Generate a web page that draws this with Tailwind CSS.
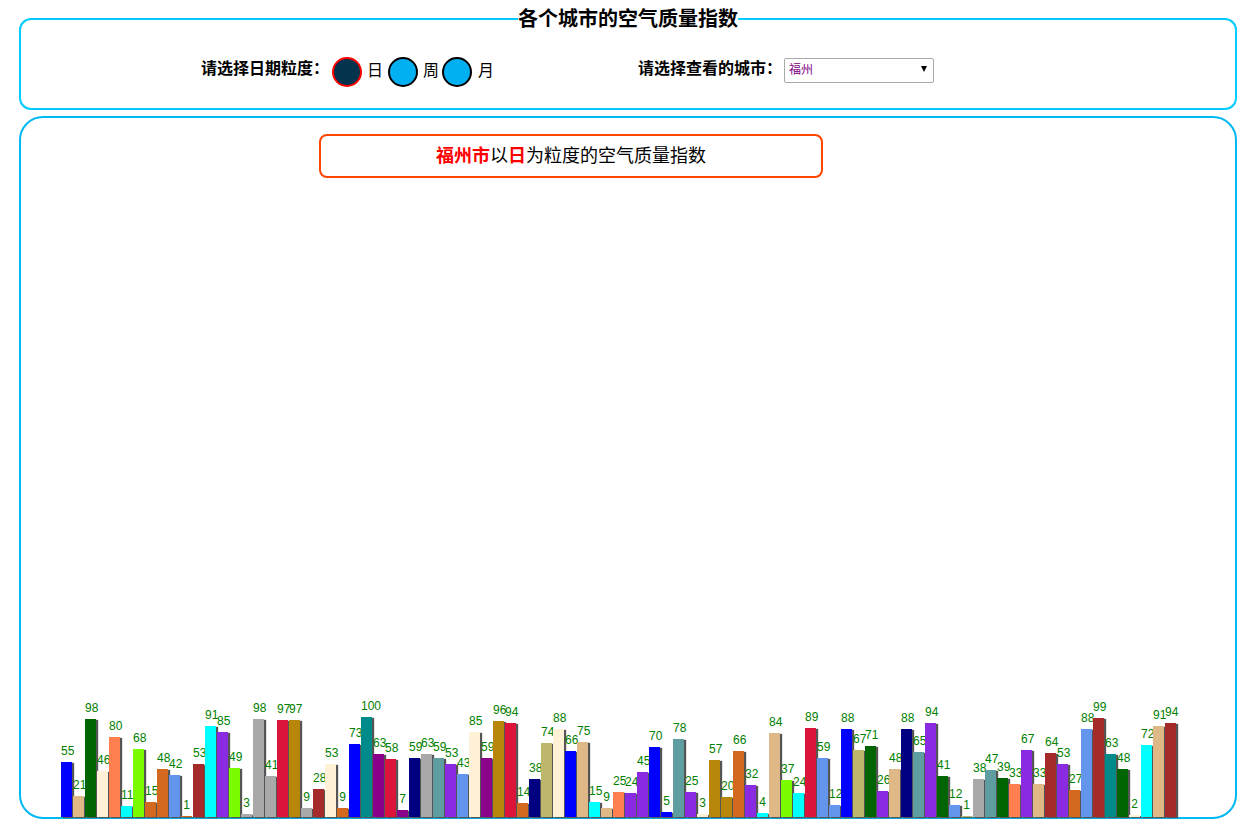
<!DOCTYPE html>
<html lang="zh-CN">
<head>
  <meta charset="UTF-8" />
  <title>各个城市的空气质量指数</title>
  <script src="https://cdn.jsdelivr.net/npm/@tailwindcss/browser@4"></script>
</head>
<body class="bg-white text-black font-['Liberation_Sans','Noto_Sans_CJK_SC',sans-serif] overflow-hidden h-[827px]">

  <fieldset class="mt-[5px] mx-[19px] h-[105px] border-2 border-[#00ccff] rounded-[12px]">
    <legend class="mx-auto text-[20px] leading-[28px] font-bold">各个城市的空气质量指数</legend>
    <div class="flex items-start pt-[24px] pl-[180px]">
      <div class="flex items-start">
        <span class="text-[16px] leading-[24px] font-bold mr-[3px]">请选择日期粒度：</span>
        <input type="radio" name="grain" checked class="appearance-none w-[30px] h-[30px] rounded-full border-2 border-black bg-[#00b0f0] checked:border-[#ff0000] checked:bg-[#03334d]" />
        <span class="text-[16px] leading-[28px] ml-[5px] mr-[5px]">日</span>
        <input type="radio" name="grain" class="appearance-none w-[30px] h-[30px] rounded-full border-2 border-black bg-[#00b0f0] checked:border-[#ff0000] checked:bg-[#03334d]" />
        <span class="text-[16px] leading-[28px] ml-[5px] mr-[3px]">周</span>
        <input type="radio" name="grain" class="appearance-none w-[30px] h-[30px] rounded-full border-2 border-black bg-[#00b0f0] checked:border-[#ff0000] checked:bg-[#03334d]" />
        <span class="text-[16px] leading-[28px] ml-[6px]">月</span>
      </div>
      <div class="flex items-start ml-[144px]">
        <span class="text-[16px] leading-[24px] font-bold mr-[2px]">请选择查看的城市：</span>
        <div class="relative">
          <select class="appearance-none w-[150px] h-[25px] border border-[#a9a9a9] rounded-[2px] bg-white pl-[4px] text-[12px] text-[#800080]">
            <option>福州</option>
            <option>厦门</option>
            <option>泉州</option>
          </select>
          <span class="absolute right-[7px] top-[9px] w-0 h-0 border-x-[3px] border-x-transparent border-t-[6px] border-t-black"></span>
        </div>
      </div>
    </div>
  </fieldset>

  <section class="mt-[6px] mx-[19px] h-[703px] border-2 border-[#00b9f1] rounded-[24px] flex flex-col justify-between">
    <div class="mt-[16px] ml-[298px] w-[504px] h-[44px] border-2 border-[#ff4500] rounded-[8px] flex items-center justify-center text-[18px]">
      <b class="text-[#ff0000]">福州市</b>以<b class="text-[#ff0000]">日</b>为粒度的空气质量指数
    </div>
    <div id="chart" class="flex items-end pl-[40px]"></div>
  </section>

  <script>
    const colors = {
      blue: 'bg-[#0000ff]',
      wood: 'bg-[#deb887]',
      green: 'bg-[#006400]',
      papaya: 'bg-[#fff1d5]',
      coral: 'bg-[#ff7f50]',
      aqua: 'bg-[#00ffff]',
      lawn: 'bg-[#7cfc00]',
      choc: 'bg-[#d2691e]',
      corn: 'bg-[#6495ed]',
      brown: 'bg-[#a52a2a]',
      violet: 'bg-[#8a2be2]',
      gray: 'bg-[#a9a9a9]',
      crimson: 'bg-[#dc143c]',
      gold: 'bg-[#b8860b]',
      navy: 'bg-[#000080]',
      cyan: 'bg-[#008b8b]',
      magenta: 'bg-[#8b008b]',
      cadet: 'bg-[#5f9ea0]',
      khaki: 'bg-[#bdb76b]'
    };

    const data = [
      [55,'blue'],[21,'wood'],[98,'green'],[46,'papaya'],[80,'coral'],[11,'aqua'],[68,'lawn'],[15,'choc'],
      [48,'choc'],[42,'corn'],[1,'choc'],[53,'brown'],[91,'aqua'],[85,'violet'],[49,'lawn'],[3,'gray'],
      [98,'gray'],[41,'gray'],[97,'crimson'],[97,'gold'],[9,'gray'],[28,'brown'],[53,'papaya'],[9,'choc'],
      [73,'blue'],[100,'cyan'],[63,'magenta'],[58,'crimson'],[7,'magenta'],[59,'navy'],[63,'gray'],[59,'cadet'],
      [53,'violet'],[43,'corn'],[85,'papaya'],[59,'magenta'],[96,'gold'],[94,'crimson'],[14,'choc'],[38,'navy'],
      [74,'khaki'],[88,'papaya'],[66,'blue'],[75,'wood'],[15,'aqua'],[9,'wood'],[25,'coral'],[24,'violet'],
      [45,'violet'],[70,'blue'],[5,'blue'],[78,'cadet'],[25,'violet'],[3,'papaya'],[57,'gold'],[20,'gold'],
      [66,'choc'],[32,'violet'],[4,'aqua'],[84,'wood'],[37,'lawn'],[24,'aqua'],[89,'crimson'],[59,'corn'],
      [12,'corn'],[88,'blue'],[67,'khaki'],[71,'green'],[26,'violet'],[48,'wood'],[88,'navy'],[65,'cadet'],
      [94,'violet'],[41,'green'],[12,'corn'],[1,'khaki'],[38,'gray'],[47,'cadet'],[39,'green'],[33,'coral'],
      [67,'violet'],[33,'wood'],[64,'brown'],[53,'violet'],[27,'choc'],[88,'corn'],[99,'brown'],[63,'cyan'],
      [48,'green'],[2,'papaya'],[72,'aqua'],[91,'wood'],[94,'brown']
    ];

    document.getElementById('chart').innerHTML = data.map(([value, color]) => `
      <div class="w-[11px] mr-px shrink-0">
        <div class="text-center text-[12px] leading-[16px] mb-[3px] text-[#008000]">${value}</div>
        <div class="${colors[color]} shadow-[2px_1px_1px_#555]" style="height:${value}px"></div>
      </div>`).join('');
  </script>

</body>
</html>
